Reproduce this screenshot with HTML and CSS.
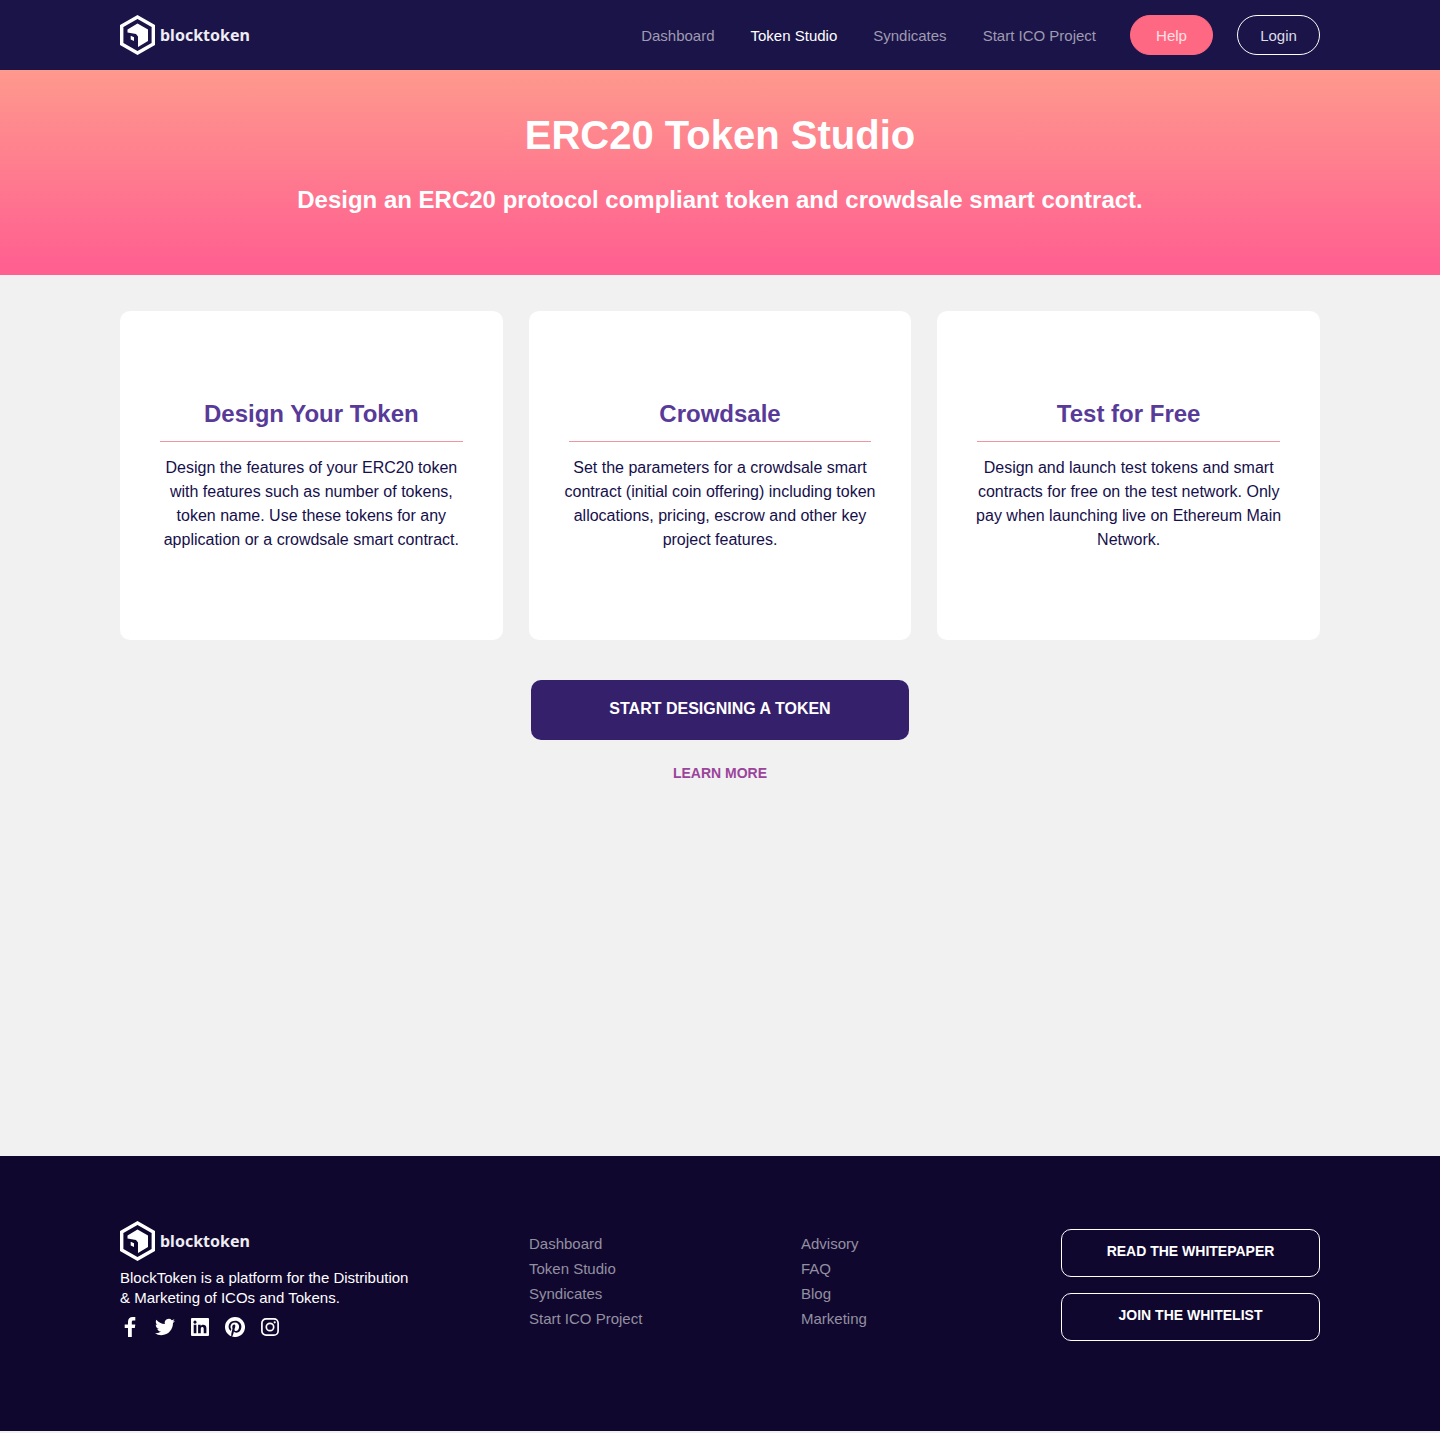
FILE: index.html
```html
<!DOCTYPE html>
<html lang="en">
<head>
<meta charset="utf-8">
<meta name="viewport" content="width=device-width, initial-scale=1">
<title>ERC20 Token Studio - BlockToken</title>
<link rel="stylesheet" href="styles.css">
</head>
<body>
<svg class="sprite" aria-hidden="true">
  <symbol id="mark" viewBox="0 0 35 40">
    <path fill="none" stroke="currentColor" stroke-width="3.4" d="M17.5 2 33.3 11v18L17.5 38 1.7 29V11z"/>
    <path fill="currentColor" d="M7.500 14.500 17.500 8.500 28 14.500V26l-10 6V21.500l-2-2.500-8.500-1.500z"/>
    <path fill="currentColor" d="M10.700 20.700l3.300 1.500v3.800l-3.300-1.500z"/>
  </symbol>
</svg>
<header class="topbar">
  <div class="container topbar-inner">
    <a class="brand" href="#"><svg class="brand-mark" aria-hidden="true"><use href="#mark"/></svg><span>blocktoken</span></a>
    <nav class="nav" aria-label="Main">
      <a href="#">Dashboard</a>
      <a class="active" href="#">Token Studio</a>
      <a href="#">Syndicates</a>
      <a href="#">Start ICO Project</a>
    </nav>
    <div class="actions">
      <button class="pill pill-help" type="button">Help</button>
      <button class="pill" type="button">Login</button>
    </div>
  </div>
</header>
<section class="hero">
  <h1>ERC20 Token Studio</h1>
  <p>Design an ERC20 protocol compliant token and crowdsale smart contract.</p>
</section>
<main class="container main">
  <div class="cards">
    <article class="card">
      <h2>Design Your Token</h2>
      <p>Design the features of your ERC20 token with features such as number of tokens, token name. Use these tokens for any application or a crowdsale smart contract.</p>
    </article>
    <article class="card">
      <h2>Crowdsale</h2>
      <p>Set the parameters for a crowdsale smart contract (initial coin offering) including token allocations, pricing, escrow and other key project features.</p>
    </article>
    <article class="card">
      <h2>Test for Free</h2>
      <p>Design and launch test tokens and smart contracts for free on the test network. Only pay when launching live on Ethereum Main Network.</p>
    </article>
  </div>
  <div class="cta">
    <button class="start" type="button">START DESIGNING A TOKEN</button>
    <a class="learn" href="#">LEARN MORE</a>
  </div>
</main>
<footer class="footer">
  <div class="container footer-grid">
    <div class="about">
      <a class="brand" href="#"><svg class="brand-mark" aria-hidden="true"><use href="#mark"/></svg><span>blocktoken</span></a>
      <p>BlockToken is a platform for the Distribution &amp; Marketing of ICOs and Tokens.</p>
      <div class="social">
        <a href="#" aria-label="Facebook"><svg viewBox="0 0 20 20"><path d="M8 20v-9H4.700V7.500H8V4.700C8 1.600 9.800 0 12.700 0h2.600v3.400h-1.900C12.100 3.400 11.800 4 11.800 5v2.500h3.500l-.5 3.500h-3v9z"/></svg></a>
        <a href="#" aria-label="Twitter"><svg viewBox="0 0 24 24"><path d="M23.950 4.570a10 10 0 0 1-2.820.77 4.960 4.960 0 0 0 2.160-2.720c-.95.550-2 .950-3.120 1.180a4.920 4.920 0 0 0-8.380 4.480C7.690 8.100 4.070 6.130 1.640 3.160a4.820 4.820 0 0 0-.67 2.480c0 1.710.87 3.210 2.190 4.100a4.900 4.900 0 0 1-2.230-.62v.06a4.920 4.920 0 0 0 3.950 4.830 5 5 0 0 1-2.210.08 4.940 4.940 0 0 0 4.600 3.420A9.870 9.870 0 0 1 0 19.540a14 14 0 0 0 7.550 2.210c9.050 0 14-7.500 14-13.980 0-.21 0-.42-.02-.63a9.940 9.940 0 0 0 2.420-2.570z"/></svg></a>
        <a href="#" aria-label="LinkedIn"><svg viewBox="0 0 20 20"><path fill-rule="evenodd" d="M2 1h16a1 1 0 0 1 1 1v16a1 1 0 0 1-1 1H2a1 1 0 0 1-1-1V2a1 1 0 0 1 1-1zM3.700 7.800h2.700v8.500H3.700zM5 3.600a1.600 1.600 0 1 0 .01 0zM8.100 7.800h2.600V9c1.200-2.100 5.700-2 5.700 2v5.300h-2.700v-4.500c0-2.500-2.900-2.300-2.900 0v4.500H8.100z"/></svg></a>
        <a href="#" aria-label="Pinterest"><svg viewBox="0 0 24 24"><path d="M12 0C5.370 0 0 5.370 0 12c0 5.080 3.160 9.420 7.620 11.160-.1-.95-.2-2.400.04-3.440l1.400-5.960s-.36-.71-.36-1.780c0-1.670.97-2.910 2.170-2.910 1.020 0 1.520.77 1.520 1.690 0 1.030-.65 2.570-1 4-.28 1.190.6 2.160 1.780 2.160 2.130 0 3.770-2.250 3.770-5.490 0-2.870-2.060-4.880-5-4.880-3.410 0-5.410 2.560-5.410 5.200 0 1.030.4 2.130.89 2.730.1.120.11.220.08.350l-.33 1.360c-.05.220-.17.260-.4.160-1.500-.7-2.440-2.890-2.440-4.650 0-3.780 2.750-7.260 7.930-7.260 4.160 0 7.400 2.970 7.400 6.930 0 4.140-2.610 7.460-6.230 7.460-1.220 0-2.360-.63-2.750-1.380l-.75 2.850c-.27 1.050-1 2.350-1.500 3.150A12 12 0 1 0 12 0z"/></svg></a>
        <a href="#" aria-label="Instagram"><svg viewBox="0 0 20 20"><rect class="line" x="1.900" y="1.900" width="16.200" height="16.200" rx="4.200"/><circle class="line" cx="10" cy="10" r="3.700"/><circle cx="14.700" cy="5.300" r="1.100"/></svg></a>
      </div>
    </div>
    <nav class="links" aria-label="Product">
      <a href="#">Dashboard</a>
      <a href="#">Token Studio</a>
      <a href="#">Syndicates</a>
      <a href="#">Start ICO Project</a>
    </nav>
    <nav class="links" aria-label="Resources">
      <a href="#">Advisory</a>
      <a href="#">FAQ</a>
      <a href="#">Blog</a>
      <a href="#">Marketing</a>
    </nav>
    <div class="footer-actions">
      <button class="outline" type="button">READ THE WHITEPAPER</button>
      <button class="outline" type="button">JOIN THE WHITELIST</button>
    </div>
  </div>
</footer>
</body>
</html>
```
FILE: styles.css
```css
* {
  box-sizing: border-box;
}

body {
  display: flex;
  flex-direction: column;
  min-height: 100vh;
  margin: 0;
  padding-bottom: 2px;
  background: #f1f1f1;
  color: #160f4b;
  font-family: "Helvetica Neue", "Liberation Sans", Arial, sans-serif;
  font-size: 16px;
  line-height: 24px;
}

h1, h2, p {
  margin: 0;
}

a {
  color: inherit;
  text-decoration: none;
}

button {
  font: inherit;
  cursor: pointer;
}

.sprite {
  position: absolute;
  width: 0;
  height: 0;
}

.container {
  width: 100%;
  max-width: 1248px;
  margin: 0 auto;
  padding: 0 24px;
}

.topbar {
  background: #1b1449;
}

.topbar-inner {
  display: flex;
  align-items: center;
  min-height: 70px;
  font-size: 15px;
}

.brand {
  display: flex;
  align-items: center;
  gap: 5px;
  color: #fff;
  font-family: "Noto Sans", sans-serif;
  font-size: 16px;
  font-weight: 700;
  line-height: 40px;
}

.brand-mark {
  width: 35px;
  height: 40px;
}

.brand span {
  color: #eeedf3;
}

.nav {
  display: flex;
  gap: 36px;
  margin-left: auto;
  padding-top: 2px;
  color: #9f9bb0;
}

.nav .active {
  color: #fff;
}

.actions {
  display: flex;
  gap: 24px;
  margin-left: 34px;
}

.pill {
  width: 83px;
  height: 40px;
  padding: 2px 0 0;
  border: 1px solid #fff;
  border-radius: 20px;
  background: transparent;
  color: #dddce4;
}

.pill-help {
  border-color: #ff6882;
  background: #ff6882;
  color: #ffe1e6;
}

.hero {
  padding: 40px 24px 60px;
  background: linear-gradient(#fe998d, #ff6090 95%);
  color: #fff;
  font-weight: 700;
  text-align: center;
}

.hero h1 {
  font-size: 40px;
  line-height: 50px;
}

.hero p {
  margin-top: 25px;
  font-size: 24px;
  line-height: 30px;
}

.main {
  flex: 1;
  padding-top: 36px;
  padding-bottom: 80px;
}

.cards {
  display: grid;
  grid-template-columns: repeat(3, 1fr);
  gap: 26px;
}

.card {
  padding: 85px 30px 88px;
  border-radius: 10px;
  background: #fff;
  text-align: center;
}

.card h2 {
  margin: 0 10px 14px;
  padding-bottom: 9px;
  border-bottom: 1px solid #f593a4;
  color: #583a98;
  font-size: 24px;
  line-height: 36px;
}

.cta {
  display: flex;
  flex-direction: column;
  align-items: center;
  gap: 21px;
  margin-top: 40px;
}

.start {
  width: 378px;
  max-width: 100%;
  padding: 17px 0 19px;
  border: 0;
  border-radius: 10px;
  background: #35206c;
  color: #fff;
  font-weight: 700;
}

.learn {
  color: #9b449b;
  font-size: 14px;
  font-weight: 700;
}

.footer {
  padding: 65px 0 90px;
  background: #10072f;
  color: #fff;
  font-size: 15px;
}

.footer-grid {
  display: grid;
  grid-template-columns: 409fr 272fr 260fr 259fr;
}

.about p {
  max-width: 300px;
  margin-top: 7px;
  line-height: 20px;
}

.social {
  display: flex;
  gap: 15px;
  margin-top: 9px;
}

.social svg {
  display: block;
  width: 20px;
  height: 20px;
  fill: #fff;
}

.social .line {
  fill: none;
  stroke: #fff;
  stroke-width: 1.7;
}

.links {
  display: flex;
  flex-direction: column;
  padding-top: 10px;
  color: #9390a0;
  line-height: 25px;
}

.footer-actions {
  display: flex;
  flex-direction: column;
  gap: 16px;
  padding-top: 8px;
}

.outline {
  padding: 11px 0 15px;
  border: 1px solid #fff;
  border-radius: 10px;
  background: transparent;
  color: #fff;
  font-size: 14px;
  font-weight: 700;
  line-height: 20px;
}

@media (max-width: 900px) {
  .topbar-inner {
    flex-wrap: wrap;
    gap: 16px;
    padding-top: 15px;
    padding-bottom: 15px;
  }

  .nav {
    flex-wrap: wrap;
    gap: 16px;
    margin-left: 0;
  }

  .actions {
    margin-left: 0;
  }

  .cards {
    grid-template-columns: 1fr;
  }

  .footer-grid {
    grid-template-columns: 1fr 1fr;
    gap: 32px;
  }
}
```
